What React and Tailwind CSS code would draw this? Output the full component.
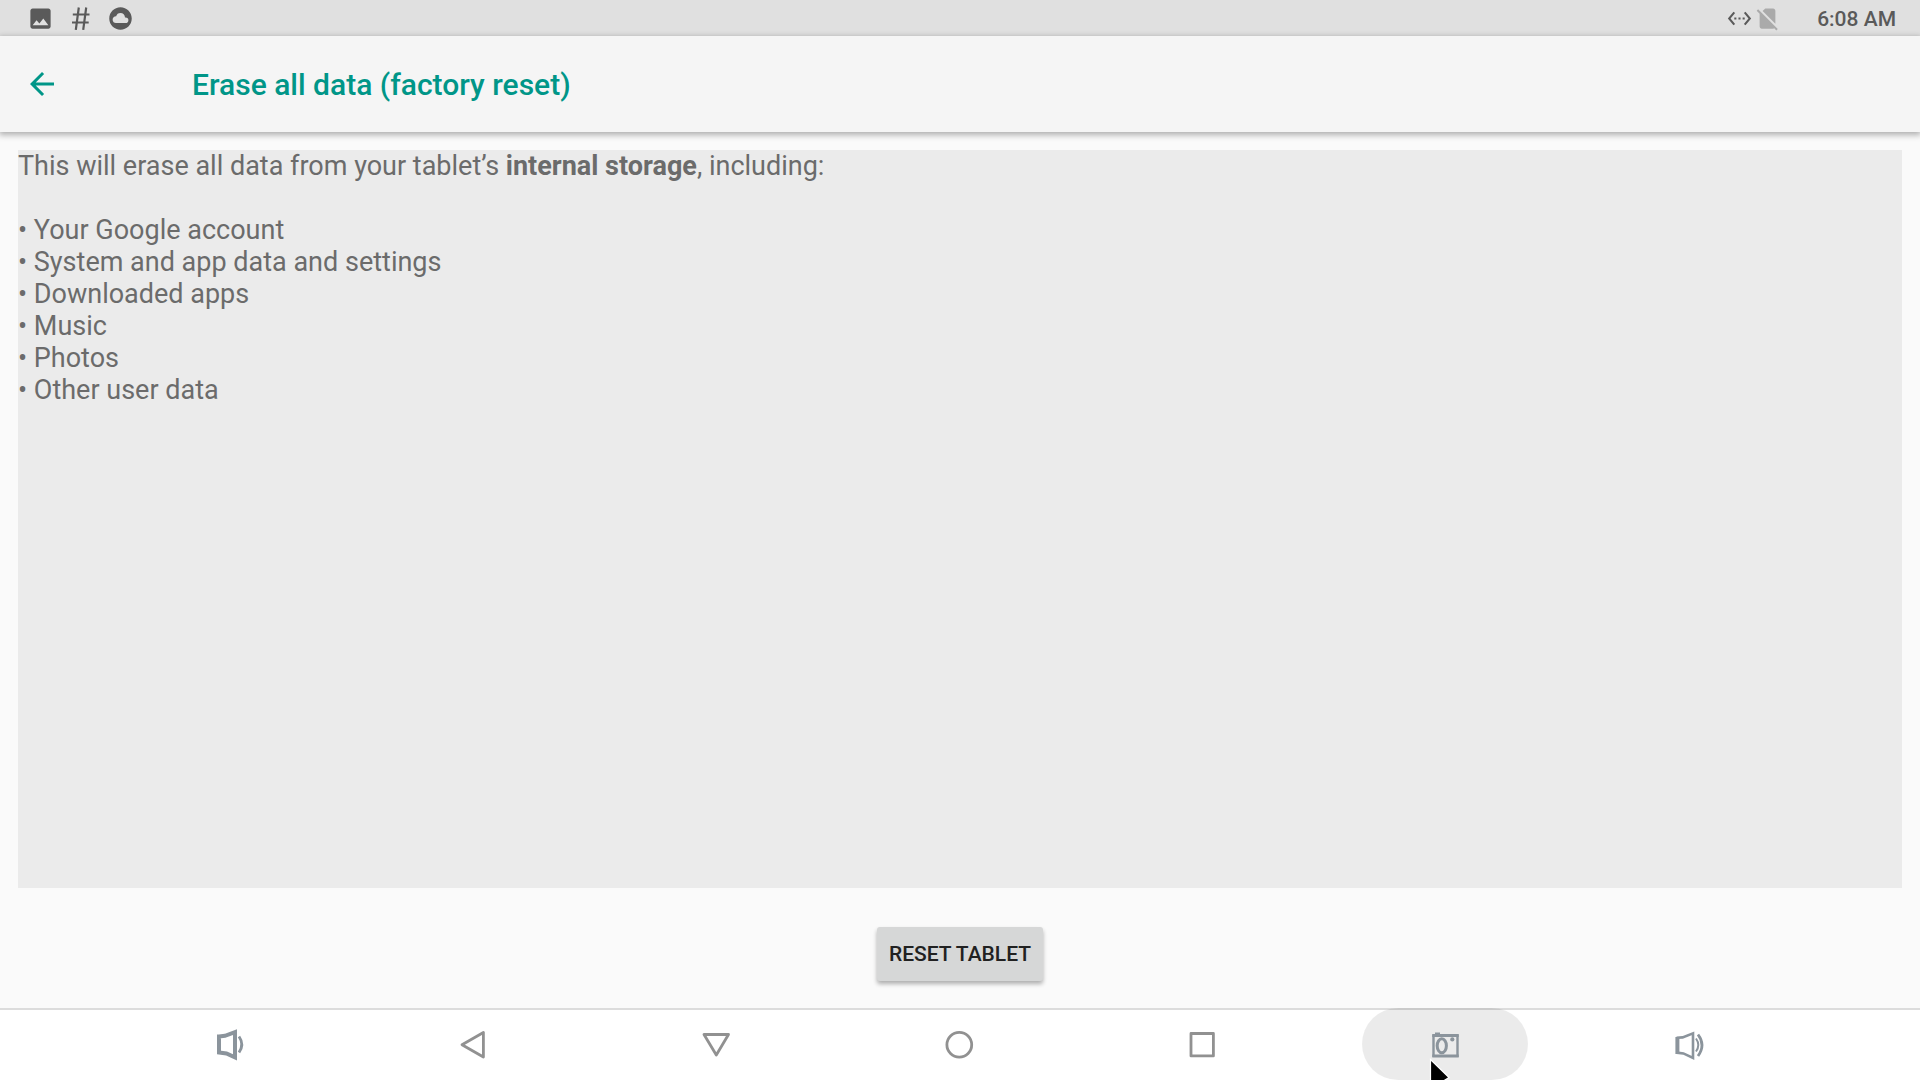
import React from 'react';
import { MdArrowBack, MdImage, MdCloudCircle, MdSettingsEthernet, MdSignalCellularNoSim } from 'react-icons/md';

const erasedItems = [
  'Your Google account',
  'System and app data and settings',
  'Downloaded apps',
  'Music',
  'Photos',
  'Other user data',
];

const NavIcon = ({ children, color = '#919191' }) => (
  <svg
    className="w-9 h-9"
    viewBox="0 0 36 36"
    fill="none"
    stroke={color}
    strokeWidth="2.8"
    strokeLinejoin="round"
    aria-hidden="true"
  >
    {children}
  </svg>
);

const navItems = [
  {
    label: 'Volume down',
    icon: (
      <NavIcon color="#8b949c">
        <path d="M7 10.400L13 9.800 23 6.200V31.400L14.400 27.400 7 26.400Z" strokeWidth="4" strokeLinejoin="miter" />
        <path d="M27 10.500Q32.600 18.500 27 26.500" strokeWidth="2.800" />
      </NavIcon>
    ),
  },
  {
    label: 'Back',
    icon: (
      <NavIcon>
        <path d="M28.400 6.500V31L7 18.700Z" />
      </NavIcon>
    ),
  },
  {
    label: 'Hide keyboard',
    icon: (
      <NavIcon>
        <path d="M6 8.500H30.500L18.300 29Z" />
      </NavIcon>
    ),
  },
  {
    label: 'Home',
    icon: (
      <NavIcon>
        <circle cx="18.300" cy="18.700" r="12.400" />
      </NavIcon>
    ),
  },
  {
    label: 'Overview',
    icon: (
      <NavIcon>
        <rect x="7" y="7.500" width="22.400" height="22.400" />
      </NavIcon>
    ),
  },
  {
    label: 'Screenshot',
    pressed: true,
    icon: (
      <NavIcon color="#8b949c">
        <path d="M6.500 8.500V31M30.500 8.500V31" strokeWidth="2.400" />
        <path d="M5.300 9.500H31.700M5.300 30H31.700" strokeWidth="3.200" />
        <path d="M8 7.500H13" strokeWidth="2" />
        <ellipse cx="14.800" cy="19.800" rx="4.600" ry="7" strokeWidth="3" />
        <circle cx="25.300" cy="13.400" r="2.100" fill="#8b949c" stroke="none" />
      </NavIcon>
    ),
  },
  {
    label: 'Volume up',
    icon: (
      <NavIcon color="#8b949c">
        <path d="M7.400 11V28" strokeWidth="4" />
        <path d="M6.600 11.800L12.600 11.400 23 7.400V32L13.400 27.400 6.600 26.600" strokeWidth="2.600" strokeLinejoin="miter" />
        <path d="M26 12.500Q30.600 19 26 25.500" strokeWidth="2" />
        <path d="M28 8.500Q36 19 28 30" strokeWidth="2.800" />
      </NavIcon>
    ),
  },
];

const StatusBar = () => (
  <div className="flex h-9 items-center justify-between bg-[#e0e0e0] pl-[27px] pr-6 text-[#5a5a5a]">
    <div className="flex items-center gap-[13px]">
      <MdImage size={27} />
      <svg width="27" height="27" viewBox="0 0 27 27" fill="none" stroke="currentColor" strokeWidth="2.2" aria-hidden="true">
        <path d="M11.800 2.500L8.800 24.800M19.200 2.500L16.200 24.800M5.800 9.500H22.500M5 17.500H21.700" />
      </svg>
      <MdCloudCircle size={27} />
    </div>
    <div className="flex items-center">
      <MdSettingsEthernet size={25} />
      <MdSignalCellularNoSim size={27} className="ml-0.5 text-[#aaaaaa]" />
      <span className="ml-9 pt-0.5 text-[21px] leading-6 font-medium">6:08 AM</span>
    </div>
  </div>
);

const Header = () => (
  <header className="relative flex h-24 items-center bg-[#f5f5f5] px-6 text-[#009688] shadow-[0_2px_6px_1px_rgba(0,0,0,0.3)]">
    <button type="button" aria-label="Navigate up">
      <MdArrowBack size={36} />
    </button>
    <h1 className="ml-[132px] pt-0.5 text-[30px] leading-9 font-medium">Erase all data (factory reset)</h1>
  </header>
);

const Cursor = () => (
  <svg
    className="absolute left-[67px] top-[50px] overflow-hidden"
    width="28"
    height="22"
    viewBox="0 0 28 22"
    aria-hidden="true"
  >
    <path d="M1.500 1.500V34L8 27 20 19.500Z" fill="#000" stroke="#fff" strokeWidth="1.200" />
  </svg>
);

const NavigationBar = () => (
  <nav className="grid h-18 grid-cols-7 bg-white pr-[110px] pl-[108px] shadow-[inset_0_2px_0_#dcdcdc]">
    {navItems.map((item) => (
      <div key={item.label} className="flex justify-center">
        <button
          type="button"
          aria-label={item.label}
          className={`relative flex w-[166px] items-center justify-center rounded-full ${item.pressed ? 'bg-black/8' : ''}`}
        >
          {item.icon}
          {item.pressed && <Cursor />}
        </button>
      </div>
    ))}
  </nav>
);

const App = () => (
  <div className="flex min-h-screen flex-col bg-[#fafafa] font-[Roboto,sans-serif]">
    <StatusBar />
    <Header />

    <main className="flex flex-1 flex-col px-[18px] pt-[18px]">
      <section className="flex-1 bg-[#ebebeb] text-[27px] leading-8 text-[#6b6b6b]">
        <p>
          This will erase all data from your tablet’s <b className="font-bold">internal storage</b>, including:
        </p>
        <ul className="mt-8">
          {erasedItems.map((item) => (
            <li key={item}>• {item}</li>
          ))}
        </ul>
      </section>

      <div className="flex justify-center pt-[39px] pb-[27px]">
        <button
          type="button"
          className="h-[54px] rounded-[3px] bg-[#d6d7d7] px-3 pt-0.5 text-[21px] font-medium text-[#212121] uppercase shadow-[0_3px_4px_rgba(0,0,0,0.3)]"
        >
          Reset tablet
        </button>
      </div>
    </main>

    <NavigationBar />
  </div>
);

export default App;
